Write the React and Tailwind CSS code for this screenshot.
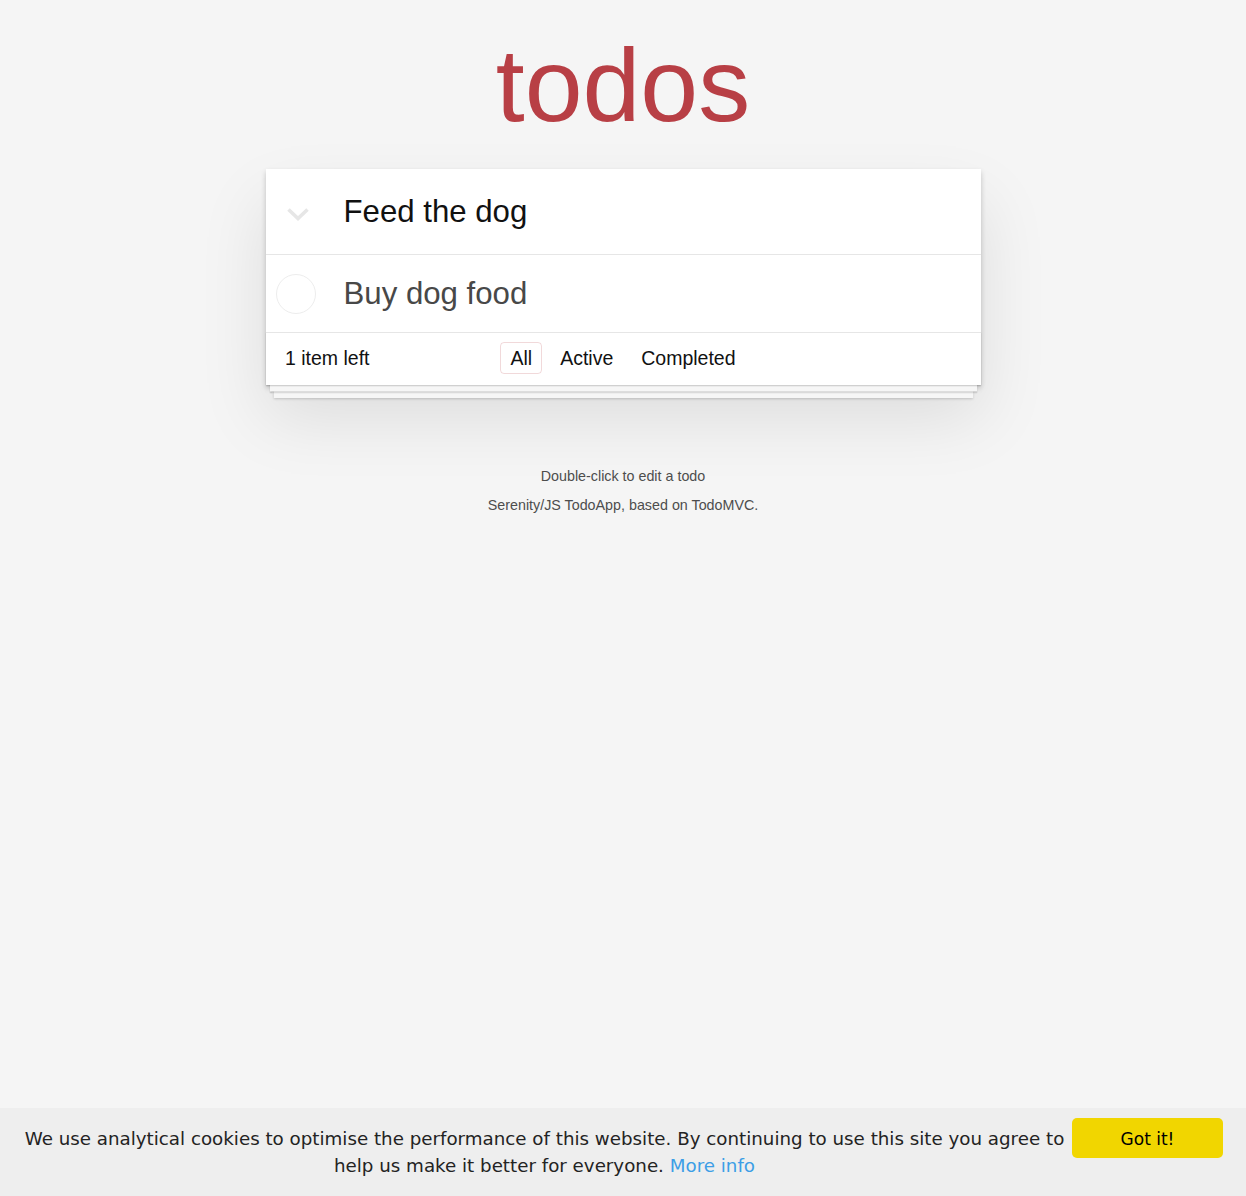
import React from 'react'

const sans = 'font-["Liberation_Sans",Arial,sans-serif]'
const filterBase = 'px-[9px] py-[4px] border rounded-[4px] leading-[22.4px]'

function Chevron() {
  return (
    <svg width="22" height="13" viewBox="0 0 22 13" className="ml-[21px] mt-[5px] shrink-0">
      <polyline points="1.5,1.5 11,10.5 20.5,1.5" fill="none" stroke="#e6e6e6" strokeWidth="3.6" />
    </svg>
  )
}

export default function App() {
  const filters = [
    { label: 'All', selected: true },
    { label: 'Active' },
    { label: 'Completed' },
  ]

  return (
    <div className={`min-h-screen bg-[#f5f5f5] text-[#111111] ${sans}`}>
      <div className="pt-[33px] flex flex-col items-center">
        <h1 className="text-[104px] leading-none text-[#b83f45] font-normal">todos</h1>

        <section className="mt-[32px] w-[715px] bg-white shadow-[0_2.6px_5.2px_rgba(0,0,0,0.2),0_32.5px_65px_rgba(0,0,0,0.1)]">
          {/* new todo input row */}
          <div className="h-[85px] flex items-center">
            <Chevron />
            <span className="ml-[35px] text-[31.2px] leading-none text-[#111111]">Feed the dog</span>
          </div>

          {/* list */}
          <ul className="border-t border-[#e6e6e6]">
            <li className="h-[76.5px] flex items-center">
              <div className="ml-[10px] mt-[2px] w-[40px] h-[40px] rounded-full border border-[#ededed] shrink-0" />
              <span className="ml-[28px] text-[31.2px] leading-none text-[#484848]">Buy dog food</span>
            </li>
          </ul>

          {/* footer */}
          <footer className="relative h-[53px] border-t border-[#e6e6e6] bg-white px-[19.5px] flex items-center text-[19.5px] shadow-[0_1.3px_1.3px_rgba(0,0,0,0.2),0_10.4px_0_-3.9px_#f6f6f6,0_11.7px_1.3px_-3.9px_rgba(0,0,0,0.2),0_20.8px_0_-7.8px_#f6f6f6,0_22.1px_2.6px_-7.8px_rgba(0,0,0,0.2)]">
            <span className="leading-[26px] -mt-[2px]">1 item left</span>
            <ul className="absolute inset-x-0 top-[9px] flex justify-center gap-[8px]">
              {filters.map(f => (
                <li key={f.label}>
                  <a className={`${filterBase} inline-block ${f.selected ? 'border-[rgba(184,63,69,0.2)]' : 'border-transparent'}`}>
                    {f.label}
                  </a>
                </li>
              ))}
            </ul>
          </footer>
        </section>

        <footer className="mt-[84px] text-center text-[14.3px] leading-none text-[#4d4d4d] flex flex-col gap-[15px]">
          <p>Double-click to edit a todo</p>
          <p>Serenity/JS TodoApp, based on TodoMVC.</p>
        </footer>
      </div>

      {/* cookie banner */}
      <div className='fixed inset-x-0 bottom-0 h-[88px] bg-[#eeeeee] flex items-start pl-[22px] pr-[23px] pt-[10px] font-["DejaVu_Sans",Verdana,sans-serif]'>
        <p className="flex-1 mt-[7px] text-center text-[18.25px] leading-[27px] text-[#232323]">
          We use analytical cookies to optimise the performance of this website. By continuing to use this site you agree to help us make it better for everyone. <a className="text-[#3d9ee6]">More info</a>
        </p>
        <button className="ml-[5px] w-[151px] h-[40px] pt-[3px] shrink-0 rounded-[5px] bg-[#f1d600] text-[17px] text-black">
          Got it!
        </button>
      </div>
    </div>
  )
}
